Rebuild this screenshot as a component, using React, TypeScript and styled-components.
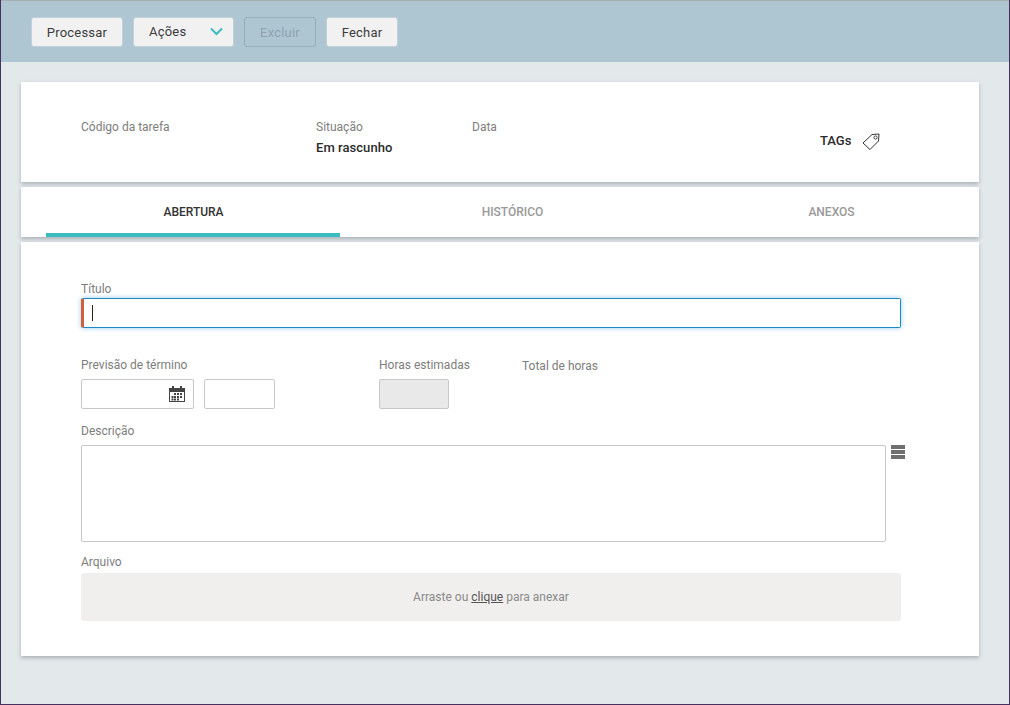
import * as React from 'react';
import styled, { createGlobalStyle } from 'styled-components';

const GlobalStyle = createGlobalStyle`
  html, body {
    margin: 0;
    padding: 0;
    height: 705px;
    overflow: hidden;
    background: #e3e8eb;
  }
  * {
    box-sizing: border-box;
  }
`;

const Page = styled.div`
  width: 1010px;
  height: 705px;
  display: flex;
  flex-direction: column;
  background: #e3e8eb;
  border-left: 1px solid #46315f;
  border-right: 1px solid #46315f;
  border-bottom: 1px solid #46315f;
  font-family: Roboto, "Liberation Sans", sans-serif;
`;

const Toolbar = styled.div`
  height: 62px;
  flex: none;
  display: flex;
  align-items: flex-start;
  gap: 10px;
  padding: 16px 0 0 30px;
  background: #aec5d2;
  border-top: 1px solid #a9adb0;
`;

const Button = styled.button<{ $width: number; $disabled?: boolean }>`
  width: ${(p) => p.$width}px;
  height: 30px;
  padding: 0;
  font-family: inherit;
  font-size: 13px;
  letter-spacing: 0.2px;
  border-radius: 3px;
  color: ${(p) => (p.$disabled ? '#8ea3ae' : '#3c3c3c')};
  background: ${(p) => (p.$disabled ? '#aec5d2' : '#f1f1f1')};
  border: 1px solid ${(p) => (p.$disabled ? '#96adba' : '#c3d0d8')};
`;

const SelectButton = styled(Button)`
  display: flex;
  align-items: center;
  justify-content: space-between;
  padding: 0 10px 2px 15px;
`;

const Content = styled.div`
  display: flex;
  flex-direction: column;
  gap: 5px;
  padding: 20px 30px 0 20px;
`;

const Card = styled.section`
  background: #fff;
  box-shadow: 0 2px 4px rgba(100, 110, 115, 0.45);
`;

const Summary = styled(Card)`
  height: 100px;
  display: flex;
  align-items: flex-start;
  padding: 38px 0 0 60px;
`;

const SummaryField = styled.div<{ $width: number }>`
  width: ${(p) => p.$width}px;
  flex: none;
`;

const SummaryValue = styled.div`
  margin-top: 6px;
  font-size: 13px;
  line-height: 16px;
  font-weight: 500;
  letter-spacing: 0.05px;
  color: #2b2b2b;
`;

const Label = styled.div`
  font-size: 12px;
  line-height: 14px;
  color: #7d7d7d;
`;

const Tags = styled.div`
  display: flex;
  align-items: flex-start;
  gap: 11px;
  margin: 13px 0 0 6px;
  font-size: 13px;
  font-weight: 500;
  color: #2b2b2b;
`;

const TabBar = styled(Card)`
  height: 50px;
  display: grid;
  grid-template-columns: repeat(3, 294px);
  gap: 25px;
  padding-left: 25px;
`;

const Tab = styled.div<{ $active?: boolean }>`
  display: flex;
  align-items: center;
  justify-content: center;
  padding: 3px 0 0 1px;
  font-size: 12px;
  font-weight: 500;
  color: ${(p) => (p.$active ? '#333' : '#999')};
  border-bottom: 4px solid ${(p) => (p.$active ? '#3bbcc0' : 'transparent')};
`;

const Form = styled(Card)`
  height: 414px;
  padding: 40px 78px 0 60px;
`;

const TitleInput = styled.div`
  height: 30px;
  margin-top: 2px;
  display: flex;
  align-items: center;
  padding-left: 8px;
  background: #fff;
  border: 1px solid #1c88c4;
  border-left: 3px solid #cf5f3d;
  border-radius: 2px;
  box-shadow: 0 0 5px rgba(60, 160, 225, 0.55);
`;

const Caret = styled.span`
  width: 1px;
  height: 16px;
  background: #222;
`;

const Row = styled.div`
  display: flex;
  align-items: flex-start;
  margin-top: 30px;
`;

const Field = styled.div<{ $width: number }>`
  width: ${(p) => p.$width}px;
  flex: none;
`;

const Inputs = styled.div`
  display: flex;
  gap: 10px;
  margin-top: 7px;
`;

const Input = styled.div<{ $width: number; $disabled?: boolean }>`
  width: ${(p) => p.$width}px;
  height: 30px;
  display: flex;
  align-items: center;
  justify-content: flex-end;
  padding-right: 8px;
  background: ${(p) => (p.$disabled ? '#e9e9e9' : '#fff')};
  border: 1px solid #c8c8c8;
  border-radius: 2px;
`;

const TotalLabel = styled(Label)`
  padding-top: 1px;
`;

const DescriptionLabel = styled(Label)`
  margin-top: 15px;
`;

const DescriptionRow = styled.div`
  display: flex;
  align-items: flex-start;
  gap: 5px;
  margin-top: 7px;
`;

const TextArea = styled.div`
  width: 805px;
  height: 97px;
  flex: none;
  background: #fff;
  border: 1px solid #c8c8c8;
  border-radius: 2px;
`;

const ListGlyph = styled.svg`
  flex: none;
`;

const FileLabel = styled(Label)`
  margin-top: 13px;
`;

const DropZone = styled.div`
  height: 48px;
  margin-top: 4px;
  display: flex;
  align-items: center;
  justify-content: center;
  gap: 3px;
  font-size: 12px;
  color: #8a8a8a;
  background: #f0efee;
  border-radius: 3px;
`;

const Link = styled.span`
  color: #555;
  text-decoration: underline;
`;

function ChevronIcon() {
  return (
    <svg width="13" height="9" viewBox="0 0 13 9">
      <path d="M1 1.5 L6.5 7 L12 1.5" fill="none" stroke="#3bbcc0" strokeWidth="2" />
    </svg>
  );
}

function TagIcon() {
  return (
    <svg width="18" height="18" viewBox="0 0 18 18">
      <path d="M1 10 L10 1.5 L17 1 L16.5 8 L8 16.5 Z" fill="none" stroke="#333" strokeWidth="1" strokeLinejoin="round" />
      <circle cx="13.5" cy="4.5" r="1.6" fill="none" stroke="#333" strokeWidth="0.9" />
    </svg>
  );
}

function CalendarIcon() {
  return (
    <svg width="16" height="16" viewBox="0 0 16 16">
      <path d="M0 2 H16 V16 H0 Z M1 6 V15 H15 V6 Z" fill="#444" fillRule="evenodd" />
      <rect x="3" y="0" width="2" height="3" fill="#444" />
      <rect x="11" y="0" width="2" height="3" fill="#444" />
      <g fill="#444">
        <rect x="5" y="7" width="2" height="2" />
        <rect x="8" y="7" width="2" height="2" />
        <rect x="11" y="7" width="2" height="2" />
        <rect x="2.5" y="10" width="2" height="2" />
        <rect x="5" y="10" width="2" height="2" />
        <rect x="8" y="10" width="2" height="2" />
        <rect x="11" y="10" width="2" height="2" />
        <rect x="2.5" y="12.5" width="2" height="2" />
        <rect x="5" y="12.5" width="2" height="2" />
        <rect x="8" y="12.5" width="2" height="2" />
      </g>
    </svg>
  );
}

function ListIcon() {
  return (
    <ListGlyph width="14" height="14" viewBox="0 0 14 14">
      <g fill="#6f6f6f">
        <rect x="0" y="0" width="14" height="4" />
        <rect x="0" y="5" width="14" height="4" />
        <rect x="0" y="10" width="14" height="4" />
      </g>
    </ListGlyph>
  );
}

export default function App() {
  return (
    <Page>
      <GlobalStyle />
      <Toolbar>
        <Button $width={92}>Processar</Button>
        <SelectButton $width={101}>
          Ações
          <ChevronIcon />
        </SelectButton>
        <Button $width={72} $disabled>Excluir</Button>
        <Button $width={72}>Fechar</Button>
      </Toolbar>
      <Content>
        <Summary>
          <SummaryField $width={235}>
            <Label>Código da tarefa</Label>
          </SummaryField>
          <SummaryField $width={156}>
            <Label>Situação</Label>
            <SummaryValue>Em rascunho</SummaryValue>
          </SummaryField>
          <SummaryField $width={342}>
            <Label>Data</Label>
          </SummaryField>
          <Tags>
            TAGs
            <TagIcon />
          </Tags>
        </Summary>
        <TabBar>
          <Tab $active>ABERTURA</Tab>
          <Tab>HISTÓRICO</Tab>
          <Tab>ANEXOS</Tab>
        </TabBar>
        <Form>
          <Label>Título</Label>
          <TitleInput>
            <Caret />
          </TitleInput>
          <Row>
            <Field $width={298}>
              <Label>Previsão de término</Label>
              <Inputs>
                <Input $width={113}>
                  <CalendarIcon />
                </Input>
                <Input $width={71} />
              </Inputs>
            </Field>
            <Field $width={143}>
              <Label>Horas estimadas</Label>
              <Inputs>
                <Input $width={70} $disabled />
              </Inputs>
            </Field>
            <Field $width={120}>
              <TotalLabel>Total de horas</TotalLabel>
            </Field>
          </Row>
          <DescriptionLabel>Descrição</DescriptionLabel>
          <DescriptionRow>
            <TextArea />
            <ListIcon />
          </DescriptionRow>
          <FileLabel>Arquivo</FileLabel>
          <DropZone>
            Arraste ou <Link>clique</Link> para anexar
          </DropZone>
        </Form>
      </Content>
    </Page>
  );
}
